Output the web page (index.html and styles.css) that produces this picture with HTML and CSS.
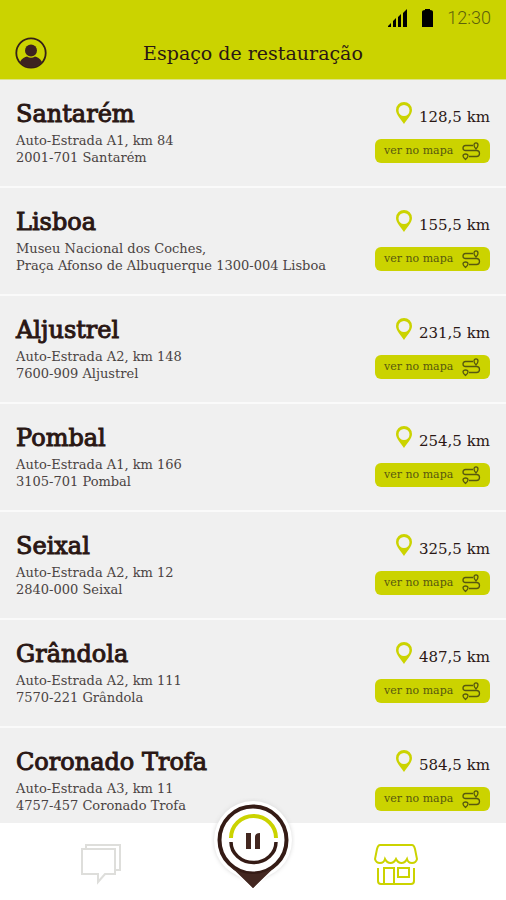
FILE: index.html
```html
<!DOCTYPE html>
<html lang="pt">
<head>
<meta charset="utf-8">
<meta name="viewport" content="width=device-width, initial-scale=1">
<title>Espaço de restauração</title>
<link rel="stylesheet" href="styles.css">
</head>
<body>
<svg class="symbols" aria-hidden="true">
  <symbol id="pin" viewBox="0 0 18 24">
    <path fill="#cbd300" fill-rule="evenodd" d="M9 1a8 8 0 0 1 8 8c0 5-5 9-8 14C6 18 1 14 1 9a8 8 0 0 1 8-8zm0 3a5.500 5.500 0 1 0 0 11A5.500 5.500 0 0 0 9 4z"/>
  </symbol>
  <symbol id="route" viewBox="0 0 20 19">
    <g fill="none" stroke="#57580f" stroke-width="1.300">
      <path d="M12 3.500H4.500Q2 3.500 2 6T4.500 8.500H15.500Q18.500 8.500 18.500 11.500T15.500 14.500H8"/>
      <path d="M15 7C13.500 5.500 13 4.500 13 3a2 2.200 0 0 1 4 0C17 4.500 16.500 5.500 15 7z"/>
      <path d="M4.500 17.500C3 16.200 2 15.200 2 14a2.500 2 0 0 1 5 0C7 15.200 6 16.200 4.500 17.500z"/>
    </g>
  </symbol>
</svg>
<div class="app">
  <header class="header">
    <div class="status">
      <svg class="signal" viewBox="0 0 20 18" aria-hidden="true"><path d="M0 18v-1l3-3v4zM5 18v-6l3-3v9zM10 18V8l3-3v13zM15 18V4l4-4v18z"/></svg>
      <svg class="battery" viewBox="0 0 11 18" aria-hidden="true"><path d="M0 3q0-2 3-2V0h5v1q3 0 3 2v15H0z"/></svg>
      <time>12:30</time>
    </div>
    <div class="bar">
      <button class="profile" type="button" aria-label="Perfil">
        <svg viewBox="0 0 32 32" aria-hidden="true">
          <circle cx="16" cy="16" r="14.700" fill="none" stroke="#352017" stroke-width="1.800"/>
          <circle cx="16" cy="13.500" r="6" fill="#3d2320"/>
          <path fill="#3d2320" d="M5 25c2-4 5-5 7-5.500q4 2.500 8 0c2 .5 5 1.500 7 5.500A14 14 0 0 1 5 25z"/>
        </svg>
      </button>
      <h1>Espaço de restauração</h1>
    </div>
  </header>
  <main class="list">
    <article class="place">
      <div class="info"><h2>Santarém</h2><p>Auto-Estrada A1, km 84<br>2001-701 Santarém</p></div>
      <div class="side"><div class="distance"><svg aria-hidden="true"><use href="#pin"/></svg>128,5 km</div>
      <button class="map" type="button">ver no mapa<svg aria-hidden="true"><use href="#route"/></svg></button></div>
    </article>
    <article class="place">
      <div class="info"><h2>Lisboa</h2><p>Museu Nacional dos Coches,<br>Praça Afonso de Albuquerque 1300-004 Lisboa</p></div>
      <div class="side"><div class="distance"><svg aria-hidden="true"><use href="#pin"/></svg>155,5 km</div>
      <button class="map" type="button">ver no mapa<svg aria-hidden="true"><use href="#route"/></svg></button></div>
    </article>
    <article class="place">
      <div class="info"><h2>Aljustrel</h2><p>Auto-Estrada A2, km 148<br>7600-909 Aljustrel</p></div>
      <div class="side"><div class="distance"><svg aria-hidden="true"><use href="#pin"/></svg>231,5 km</div>
      <button class="map" type="button">ver no mapa<svg aria-hidden="true"><use href="#route"/></svg></button></div>
    </article>
    <article class="place">
      <div class="info"><h2>Pombal</h2><p>Auto-Estrada A1, km 166<br>3105-701 Pombal</p></div>
      <div class="side"><div class="distance"><svg aria-hidden="true"><use href="#pin"/></svg>254,5 km</div>
      <button class="map" type="button">ver no mapa<svg aria-hidden="true"><use href="#route"/></svg></button></div>
    </article>
    <article class="place">
      <div class="info"><h2>Seixal</h2><p>Auto-Estrada A2, km 12<br>2840-000 Seixal</p></div>
      <div class="side"><div class="distance"><svg aria-hidden="true"><use href="#pin"/></svg>325,5 km</div>
      <button class="map" type="button">ver no mapa<svg aria-hidden="true"><use href="#route"/></svg></button></div>
    </article>
    <article class="place">
      <div class="info"><h2>Grândola</h2><p>Auto-Estrada A2, km 111<br>7570-221 Grândola</p></div>
      <div class="side"><div class="distance"><svg aria-hidden="true"><use href="#pin"/></svg>487,5 km</div>
      <button class="map" type="button">ver no mapa<svg aria-hidden="true"><use href="#route"/></svg></button></div>
    </article>
    <article class="place">
      <div class="info"><h2>Coronado Trofa</h2><p>Auto-Estrada A3, km 11<br>4757-457 Coronado Trofa</p></div>
      <div class="side"><div class="distance"><svg aria-hidden="true"><use href="#pin"/></svg>584,5 km</div>
      <button class="map" type="button">ver no mapa<svg aria-hidden="true"><use href="#route"/></svg></button></div>
    </article>
  </main>
  <nav class="tabs">
    <button class="tab" type="button" aria-label="Mensagens">
      <svg class="chat" viewBox="0 0 42 42" fill="none" stroke="#dededb" stroke-width="2" aria-hidden="true"><path d="M2 6h33v25H25l-7 8v-8H2zM6 5V2h34v25h-4"/></svg>
    </button>
    <button class="home" type="button" aria-label="Início">
      <svg viewBox="0 0 84 94" aria-hidden="true">
        <circle class="halo" cx="42" cy="42" r="39"/>
        <path fill="#fff" d="M10 61l32 31 32-31z"/>
        <path fill="#432720" d="M12 59l30 31 30-31q-10 13-30 13T12 59z"/>
        <circle cx="42" cy="42" r="33.500" fill="#fff" stroke="#351b15" stroke-width="4"/>
        <path fill="#432720" d="M17 66q11 10 25 10t25-10L42 90z"/>
        <path d="M20 40a22.500 22 0 0 1 45 0" fill="none" stroke="#cbd300" stroke-width="4"/>
        <path d="M20 44a22.500 20.500 0 0 0 45 0" fill="none" stroke="#351b15" stroke-width="3.500"/>
        <path fill="#432720" d="M35 35h5v16h-5zM44 51V39q0-4 5-4v16z"/>
      </svg>
    </button>
    <button class="tab" type="button" aria-label="Restauração">
      <svg class="shop" viewBox="0 0 44 42" fill="none" stroke="#cbd300" stroke-width="2" aria-hidden="true"><path d="M6 2h32q2 0 3 4l2 10q-1 4-5 4-4 0-5-4-2 4-5.500 4T22 16q-2 4-5.500 4T11 16q-1 4-5 4t-5-4L3 6q1-4 3-4zM4 25v13q0 3 3 3h30q3 0 3-3V25M10 41V25h10v16M24 25h11v9H24z"/></svg>
    </button>
  </nav>
</div>
</body>
</html>
```
FILE: styles.css
```css
* { box-sizing: border-box; }
body {
  margin: 0;
  font-family: "DejaVu Serif", serif;
  color: #2a1714;
}
h1, h2, p { margin: 0; font-weight: 400; }
button { padding: 0; border: 0; background: none; font: inherit; color: inherit; }
svg { display: block; }
.symbols { position: absolute; width: 0; height: 0; }
.app { display: flex; flex-direction: column; height: 100vh; background: #f0f0f0; }
.header { flex: none; height: 80px; background: #cbd300; border-bottom: 1px solid #dde38a; }
.status {
  display: flex;
  align-items: center;
  justify-content: flex-end;
  height: 36px;
  padding: 0 15px;
  font: 300 18px/20px Roboto, sans-serif;
  color: #5d610b;
}
.signal { width: 20px; height: 18px; margin-right: 14px; }
.battery { width: 11px; height: 18px; margin-right: 14px; }
.bar {
  display: grid;
  grid-template-columns: 32px 1fr 32px;
  align-items: center;
  height: 34px;
  padding: 0 15px;
}
.profile svg { width: 32px; height: 32px; }
.bar h1 { font-size: 19px; line-height: 24px; text-align: center; }
.list { flex: 1; min-height: 0; overflow: hidden; }
.place {
  display: flex;
  justify-content: space-between;
  height: 108px;
  padding: 16px 16px 0;
  border-bottom: 2px solid #fafafa;
}
.info h2 { font-size: 24px; line-height: 36px; -webkit-text-stroke: 1px; }
.info p { font-size: 13px; line-height: 17px; color: #4a4342; white-space: nowrap; }
.side { display: flex; flex: none; flex-direction: column; align-items: flex-end; gap: 6px; padding-top: 5px; }
.distance { display: flex; align-items: center; gap: 6px; font-size: 15px; line-height: 32px; height: 32px; }
.distance svg { width: 18px; height: 24px; margin-bottom: 8px; }
.map {
  display: flex;
  align-items: center;
  justify-content: space-between;
  width: 115px;
  height: 24px;
  padding: 0 9px;
  border-radius: 6px;
  background: #cbd300;
  color: #57580f;
  font-size: 11px;
  line-height: 16px;
}
.map svg { width: 20px; height: 19px; }
.tabs {
  display: grid;
  grid-template-columns: 1fr 84px 1fr;
  flex: none;
  height: 77px;
  background: #fff;
}
.tab { display: flex; justify-content: center; padding: 20px 10px 0 0; }
.chat { width: 42px; height: 42px; }
.shop { width: 44px; height: 42px; }
.home { position: relative; height: 94px; margin-top: -25px; }
.home svg { width: 84px; height: 94px; }
.halo { fill: #fff; filter: drop-shadow(0 0 2px #d8d8d8); }
```
